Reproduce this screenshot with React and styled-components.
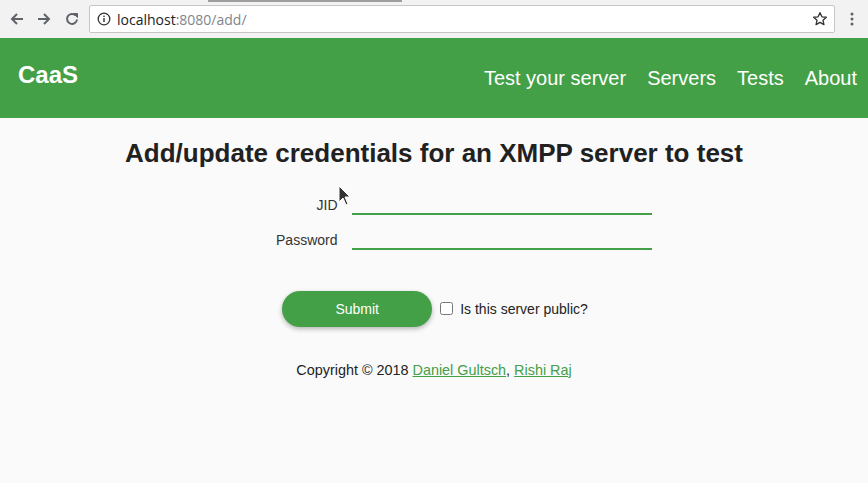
import styled, { createGlobalStyle } from 'styled-components'

const GlobalStyle = createGlobalStyle`
  html, body {
    margin: 0;
    padding: 0;
    background: #fafafa;
    font-family: "Liberation Sans", Arial, sans-serif;
  }
`

// browser chrome
const Chrome = styled.div`
  position: relative;
  height: 38px;
  display: flex;
  align-items: center;
  background: #f2f2f2;
  box-sizing: border-box;
  padding: 0 0 0 3px;
`

const TabEdge = styled.div`
  position: absolute;
  top: 0;
  left: 208px;
  width: 194px;
  height: 2px;
  background: #9e9e9e;
`

const NavIcon = styled.div`
  width: 28px;
  height: 28px;
  display: flex;
  align-items: center;
  justify-content: center;
  margin-right: ${p => p.gap || 0}px;
  color: #5f6368;
`

const UrlBox = styled.div`
  flex: 0 0 746px;
  height: 28px;
  box-sizing: border-box;
  display: flex;
  align-items: center;
  background: #fff;
  border: 1px solid #c6c6c6;
  border-radius: 2px;
  padding: 0 6px 0 7px;
  font-family: "Open Sans", "DejaVu Sans", sans-serif;
  font-size: 14px;
`

const Host = styled.span`
  color: #202124;
  margin-left: 6px;
`

const Path = styled.span`
  color: #80868b;
`

const Spacer = styled.div`
  flex: 1;
`

// page
const Header = styled.header`
  height: 80px;
  background: #43a047;
  display: flex;
  align-items: center;
  justify-content: space-between;
  padding: 0 11px 0 18px;
  color: #fff;
`

const Brand = styled.div`
  font-size: 24px;
  font-weight: bold;
  margin-top: -6px;
`

const Nav = styled.nav`
  display: flex;
  gap: 21px;
  font-size: 20px;
`

const NavLink = styled.a`
  color: #fff;
  text-decoration: none;
`

const Main = styled.main`
  position: relative;
  display: flex;
  flex-direction: column;
  align-items: center;
`

const Title = styled.h2`
  font-size: 26px;
  font-weight: bold;
  color: #212121;
  margin: 20px 0 22px;
`

const Form = styled.form`
  display: flex;
  flex-direction: column;
  align-items: center;
`

const Row = styled.div`
  display: flex;
  align-items: flex-end;
  margin-bottom: 11px;
  margin-left: ${p => p.shift || 0}px;
`

const Label = styled.label`
  width: 80px;
  text-align: right;
  font-size: 14px;
  color: #333;
  margin-right: 14px;
  padding-bottom: 2px;
`

const Input = styled.input`
  width: 300px;
  height: 24px;
  box-sizing: border-box;
  border: none;
  border-bottom: 2px solid #43a047;
  background: transparent;
  outline: none;
  font-size: 14px;
`

const Actions = styled.div`
  display: flex;
  align-items: center;
  margin-top: 30px;
  margin-left: 2px;
`

const Submit = styled.button`
  width: 150px;
  height: 36px;
  border: none;
  border-radius: 18px;
  background: #43a047;
  color: #fff;
  font-family: inherit;
  font-size: 14px;
  box-shadow: 0 2px 5px rgba(0, 0, 0, 0.28);
`

const Check = styled.input`
  width: 13px;
  height: 13px;
  margin: 0 7px 0 8px;
  position: relative;
  top: -1px;
`

const CheckLabel = styled.label`
  font-size: 14px;
  color: #222;
`

const Footer = styled.p`
  font-size: 14.4px;
  color: #222;
  margin: 35px 0 0;
`

const Link = styled.a`
  color: #43a047;
  text-decoration: underline;
`

const Cursor = styled.svg`
  position: absolute;
  left: 338px;
  top: 67px;
`

const App = () => {
  return (
    <>
      <GlobalStyle />
      <Chrome>
        <TabEdge />
        <NavIcon gap={-1}>
          <svg width="16" height="16" viewBox="0 0 16 16" fill="none" stroke="#5f6368" strokeWidth="2">
            <path d="M14 8H3M8 3L3 8l5 5" />
          </svg>
        </NavIcon>
        <NavIcon>
          <svg width="16" height="16" viewBox="0 0 16 16" fill="none" stroke="#5f6368" strokeWidth="2">
            <path d="M2 8h11M8 3l5 5-5 5" />
          </svg>
        </NavIcon>
        <NavIcon gap={3}>
          <svg width="16" height="16" viewBox="0 0 16 16" fill="none" stroke="#5f6368" strokeWidth="2">
            <path d="M13 8.5A5 5 0 1 1 11.5 4.3" />
            <path d="M9.5 2.5h4v4z" fill="#5f6368" strokeWidth="1" />
          </svg>
        </NavIcon>
        <UrlBox>
          <svg width="14" height="14" viewBox="0 0 14 14">
            <circle cx="7" cy="7" r="5.8" fill="none" stroke="#333" strokeWidth="1.3" />
            <rect x="6.3" y="6" width="1.4" height="4" fill="#333" />
            <rect x="6.3" y="3.6" width="1.4" height="1.4" fill="#333" />
          </svg>
          <Host>localhost<Path>:8080/add/</Path></Host>
          <Spacer />
          <svg width="16" height="16" viewBox="0 0 24 24" fill="none" stroke="#333" strokeWidth="2" strokeLinejoin="round">
            <path d="M12 2.5l2.9 6.2 6.6.7-5 4.5 1.4 6.6L12 17.1l-5.9 3.4 1.4-6.6-5-4.5 6.6-.7z" />
          </svg>
        </UrlBox>
        <Spacer />
        <NavIcon gap={2}>
          <svg width="4" height="14" viewBox="0 0 4 14" fill="#5f6368">
            <circle cx="2" cy="2" r="1.5" />
            <circle cx="2" cy="7" r="1.5" />
            <circle cx="2" cy="12" r="1.5" />
          </svg>
        </NavIcon>
      </Chrome>

      <Header>
        <Brand>CaaS</Brand>
        <Nav>
          <NavLink href="#">Test your server</NavLink>
          <NavLink href="#">Servers</NavLink>
          <NavLink href="#">Tests</NavLink>
          <NavLink href="#">About</NavLink>
        </Nav>
      </Header>

      <Main>
        <Title>Add/update credentials for an XMPP server to test</Title>
        <Form onSubmit={e => e.preventDefault()}>
          <Row shift={41}>
            <Label htmlFor="jid">JID</Label>
            <Input id="jid" type="text" />
          </Row>
          <Row shift={41}>
            <Label htmlFor="password">Password</Label>
            <Input id="password" type="password" />
          </Row>
          <Actions>
            <Submit type="submit">Submit</Submit>
            <Check id="public" type="checkbox" />
            <CheckLabel htmlFor="public">Is this server public?</CheckLabel>
          </Actions>
        </Form>
        <Footer>
          Copyright © 2018 <Link href="#">Daniel Gultsch</Link>, <Link href="#">Rishi Raj</Link>
        </Footer>
        <Cursor width="14" height="22" viewBox="0 0 14 22">
          <path d="M1 1v16l4-4 3 7 2-1-3-7h5z" fill="#333" stroke="#fff" strokeWidth="1" />
        </Cursor>
      </Main>
    </>
  )
}

export default App
